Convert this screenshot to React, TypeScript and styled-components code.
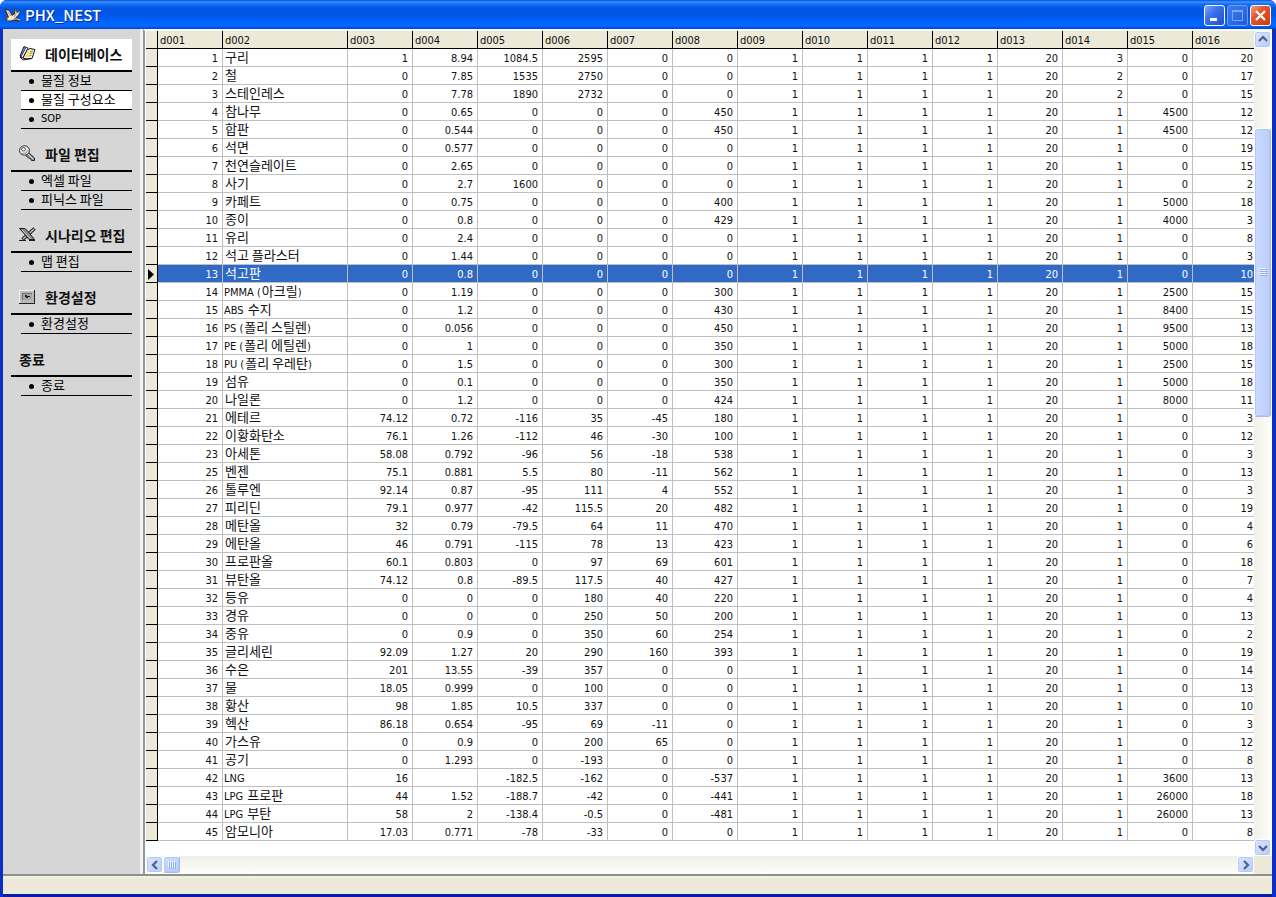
import React from "react";
import styled, { createGlobalStyle, css } from "styled-components";

const GlobalStyle = createGlobalStyle`
  * { box-sizing: border-box; }
  html, body { margin: 0; padding: 0; background: #fff; }
  body {
    font-family: "DejaVu Sans Condensed", "DejaVu Sans", "Noto Sans CJK KR", sans-serif;
    font-size: 11px;
    color: #111;
  }
  button { padding: 0; margin: 0; font: inherit; }
`;

const Window = styled.div`
  min-height: 100vh;
  display: flex;
  flex-direction: column;
  overflow: hidden;
  border-radius: 7px 7px 0 0;
  background: #0a2fc4;
`;

const TitleBar = styled.header`
  height: 29px;
  display: flex;
  align-items: center;
  gap: 4px;
  padding: 1px 5px 0 5px;
  background: linear-gradient(
    to bottom,
    #0a4fd8 0px,
    #3c93ff 2px,
    #1470f5 4px,
    #0358e8 8px,
    #0055e5 14px,
    #0262fb 21px,
    #0468ff 26px,
    #0344cf 29px
  );
`;

const Title = styled.h1`
  flex: 1;
  margin: 0;
  padding-bottom: 1px;
  font: 500 15px/20px "Noto Sans CJK KR", "Liberation Sans", sans-serif;
  color: #fff;
  text-shadow: 1px 1px 0 #0a2e8c;
`;

const WindowButtons = styled.div`
  display: flex;
  gap: 2px;
`;

const WindowButton = styled.button<{ $kind: "normal" | "dim" | "close" }>`
  width: 21px;
  height: 21px;
  display: grid;
  place-items: center;
  border-radius: 3px;
  border: 1px solid ${(p) => (p.$kind === "dim" ? "#6f9df5" : "#fff")};
  background: ${(p) =>
    p.$kind === "close"
      ? "linear-gradient(135deg, #f0a088 0%, #e2552c 40%, #cc3c10 100%)"
      : p.$kind === "dim"
        ? "linear-gradient(135deg, #3f7cf0, #1c5be0)"
        : "linear-gradient(135deg, #7ba6f8 0%, #3a70ea 40%, #1c50d8 100%)"};
`;

const Body = styled.div`
  flex: 1;
  display: flex;
  margin: 0 4px 0 3px;
`;

const Sidebar = styled.nav`
  width: 140px;
  flex: none;
  display: flex;
  flex-direction: column;
  gap: 10px;
  padding: 10px 8px;
  background: #d6d6d6;
  border-right: 3px solid #f0f2f2;
`;

const MenuGroup = styled.section`
  width: 121px;
`;

const GroupTitle = styled.h2<{ $active?: boolean }>`
  height: 33px;
  display: flex;
  align-items: center;
  gap: 9px;
  margin: 0;
  padding: 0 0 2px 8px;
  border-bottom: 2px solid #000;
  font: bold 14px/20px "Noto Sans CJK KR", sans-serif;
  white-space: nowrap;
  background: ${(p) => (p.$active ? "#fff" : "transparent")};
  svg {
    flex: none;
  }
`;

const MenuList = styled.ul`
  list-style: none;
  margin: 0 0 0 10px;
  padding: 0;
`;

const Hangul = styled.span`
  font-family: "Noto Sans CJK KR", sans-serif;
  font-size: 13px;
`;

const MenuLink = styled.a<{ $active?: boolean }>`
  height: 19px;
  display: flex;
  align-items: center;
  gap: 7px;
  padding-left: 8px;
  border-bottom: 1px solid #000;
  color: #000;
  text-decoration: none;
  line-height: 18px;
  white-space: pre;
  background: ${(p) => (p.$active ? "#fff" : "transparent")};
  &::before {
    content: "";
    width: 5px;
    height: 5px;
    border-radius: 50%;
    background: #000;
  }
  ${Hangul} {
    padding-bottom: 2px;
    line-height: 16px;
  }
`;

const GridPanel = styled.main`
  flex: 1;
  min-width: 0;
  display: grid;
  grid-template-columns: minmax(0, 1fr) 18px;
  grid-template-rows: 1fr 18px;
  padding-left: 1px;
  border-top: 2px solid #f6fafa;
  border-left: 2px solid #8f999e;
  background: #fff;
`;

const GridView = styled.div`
  overflow: hidden;
  padding-bottom: 15px;
`;

const Table = styled.table`
  width: 1112px;
  table-layout: fixed;
  border-collapse: separate;
  border-spacing: 0;
`;

const Col = styled.col<{ $w: number }>`
  width: ${(p) => p.$w}px;
`;

const beigeCell = css`
  height: 18px;
  padding: 2px 0 0 2px;
  background: #ece9d8;
  border-right: 1px solid #000;
  border-bottom: 1px solid #000;
`;

const HeadCell = styled.th`
  ${beigeCell}
  font-weight: normal;
  text-align: left;
  line-height: 15px;
`;

const MarkCell = styled.td`
  ${beigeCell}
  line-height: 0;
`;

const Cell = styled.td<{ $name?: boolean }>`
  height: 18px;
  padding: 2px 4px 0 1px;
  border-right: 1px solid #c0c0c0;
  border-bottom: 1px solid #c0c0c0;
  line-height: 15px;
  white-space: pre;
  text-align: ${(p) => (p.$name ? "left" : "right")};
  ${Hangul} {
    display: inline-block;
    height: 15px;
    padding-left: 1px;
    line-height: 12px;
    vertical-align: top;
  }
`;

const Row = styled.tr<{ $selected: boolean }>`
  ${(p) =>
    p.$selected &&
    css`
      ${Cell} {
        background: #316ac5;
        color: #fff;
      }
    `}
`;

const VScroll = styled.div`
  display: flex;
  flex-direction: column;
  align-items: stretch;
  padding-right: 1px;
  background: linear-gradient(to right, #f1f0e8, #fefefa);
`;

const HScroll = styled.div`
  display: flex;
  background: linear-gradient(to bottom, #f1f0e8, #fefefa);
`;

const scrollFace = css`
  display: grid;
  place-items: center;
  border: 1px solid #fff;
  border-radius: 3px;
  box-shadow: inset 0 0 0 1px #b4c8f6;
`;

const ScrollButton = styled.button`
  ${scrollFace}
  width: 17px;
  height: 17px;
  flex: none;
  background: linear-gradient(135deg, #dbe6ff, #b8cdfb);
`;

const VThumb = styled.div`
  ${scrollFace}
  flex: 288 0 0;
  background: linear-gradient(to right, #cbdaff, #bacdfb);
  border-right-color: #a6bce8;
  border-bottom-color: #a6bce8;
`;

const Track = styled.div<{ $grow: number }>`
  flex: ${(p) => p.$grow} 0 0;
`;

const HThumb = styled.div`
  ${scrollFace}
  width: 17px;
  height: 17px;
  background: linear-gradient(to bottom, #cbdaff, #bacdfb);
  border-right-color: #a6bce8;
  border-bottom-color: #a6bce8;
`;

const Corner = styled.div`
  background: #ece9d8;
`;

const StatusBar = styled.footer`
  height: 23px;
  margin: 0 4px 0 3px;
  border-top: 2px solid #8f8f8c;
  border-bottom: 3px solid #0a1fa8;
  background: linear-gradient(to bottom, #f4f3e8 0px, #e8ead6 4px, #f0e4d8 9px, #ecebd8 14px, #eaedda 18px);
`;

const BirdIcon = () => (
  <svg width="16" height="16" viewBox="0 0 16 16" aria-hidden="true">
    <path d="M0 1l4 2 3 4 2-2 0-5 3 5 4-3-2 6-2 3 3 3-1 1-5-1-3 1-5-1-1-2 2-3-2-4z" fill="#3a3a36" />
    <path d="M1 3l3 1 3 5 3-2 0-4 2 3 3-2-2 4-3 3-3 2-4 0-1-1 2-2z" fill="#efeadc" />
    <path d="M2 13l4 0 3-1 3 0 3 1" stroke="#e4d4a6" fill="none" />
    <path d="M3 5l3 4M11 4l0 3-2 3" stroke="#9b9788" fill="none" />
    <path d="M1 11l2 0" stroke="#c98a2c" />
  </svg>
);

const BookIcon = () => (
  <svg width="17" height="17" viewBox="0 0 17 17" aria-hidden="true">
    <path d="M5 1.500l3 1.500-5 10-2-2z" fill="#8d94dc" stroke="#111" />
    <path d="M7 2l2 1-5 10-2-1z" fill="#fff" stroke="#2c3080" />
    <path d="M8 5l3-1.500 5 1-3 9-6 .5-3-1z" fill="#fffce0" stroke="#111" />
    <path d="M9 6l2-1-3 8-2-.5z" fill="#f2e04a" />
    <path d="M11 6.500l3-.5M10.500 8.500l3-.5M9.500 11l3-.5" stroke="#8c7d20" />
    <path d="M1 12l3 3 8-1.500" stroke="#111" fill="none" />
  </svg>
);

const KeyIcon = () => (
  <svg width="17" height="17" viewBox="0 0 17 17" aria-hidden="true">
    <path d="M9 7l6.500 6v2.500h-3l-1-2-2-.5-3-3z" fill="#8f8f8f" stroke="#222" />
    <path d="M9 9l5 5" stroke="#e8e8e8" />
    <ellipse cx="5.500" cy="5.500" rx="5" ry="4.700" fill="#e6e6e6" stroke="#333" />
    <ellipse cx="4.500" cy="4.300" rx="2" ry="1.600" fill="#fff" stroke="#555" />
    <path d="M3 8.500l4-.5 2.500-3" stroke="#999" fill="none" />
  </svg>
);

const ToolsIcon = () => (
  <svg width="17" height="15" viewBox="0 0 17 15" aria-hidden="true">
    <path d="M15.500 1.500l-12 11" stroke="#1c1c1c" strokeWidth="3.500" />
    <path d="M15 2l-11 10" stroke="#c4c4c4" strokeWidth="1.500" />
    <path d="M.5 1.500h5.500l3 3 6.500 8h-5.500l-5-6z" fill="#8a8a8a" stroke="#1c1c1c" />
    <path d="M3 3l9 9" stroke="#c8c8c8" />
    <path d="M0 13.500h7M10 13.500h6" stroke="#1c1c1c" />
  </svg>
);

const MonitorIcon = () => (
  <svg width="17" height="14" viewBox="0 0 17 14" aria-hidden="true">
    <path d="M0 0h16v14H0z" fill="#222" />
    <path d="M0 0h15v13H0z" fill="#f2f2f2" />
    <path d="M1 1h14v12H1z" fill="#b9b9b9" />
    <path d="M3 3h10v7H3z" fill="#707070" />
    <path d="M4 4h9v6H4z" fill="#a6a6a6" />
    <path d="M6 5h2v1h3v1H9v1H7V7H6z" fill="#222" />
  </svg>
);

const arrows = {
  up: "M1 6l4-4 4 4",
  down: "M1 3l4 4 4-4",
  left: "M7 1L3 5l4 4",
  right: "M3 1l4 4-4 4",
};

const Arrow = ({ dir }: { dir: keyof typeof arrows }) => (
  <svg width="10" height="10" viewBox="0 0 10 10" aria-hidden="true">
    <path d={arrows[dir]} fill="none" stroke="#4d6185" strokeWidth="2.200" />
  </svg>
);

const Grip = ({ vertical }: { vertical?: boolean }) => (
  <svg width="8" height="8" viewBox="0 0 8 8" aria-hidden="true">
    <path
      d={vertical ? "M0 .5h7M0 2.500h7M0 4.500h7M0 6.500h7" : "M.5 0v7M2.500 0v7M4.500 0v7M6.500 0v7"}
      stroke="#eef4fe"
    />
    <path
      d={vertical ? "M1 1.500h7M1 3.500h7M1 5.500h7M1 7.500h7" : "M1.500 1v7M3.500 1v7M5.500 1v7M7.500 1v7"}
      stroke="#8cb0f8"
    />
  </svg>
);

/* Korean runs are set larger than the Latin text beside them. */
const Mixed = ({ text }: { text: string }) => (
  <>
    {text
      .split(/([가-힣]+(?: [가-힣]+)*)/)
      .filter(Boolean)
      .map((part, i) => (/[가-힣]/.test(part) ? <Hangul key={i}>{part}</Hangul> : part))}
  </>
);

type Group = { title: string; icon?: React.ReactNode; active?: boolean; items: string[] };

const menu: Group[] = [
  { title: "데이터베이스", icon: <BookIcon />, active: true, items: ["물질 정보", "물질 구성요소", "SOP"] },
  { title: "파일 편집", icon: <KeyIcon />, items: ["엑셀 파일", "피닉스 파일"] },
  { title: "시나리오 편집", icon: <ToolsIcon />, items: ["맵 편집"] },
  { title: "환경설정", icon: <MonitorIcon />, items: ["환경설정"] },
  { title: "종료", items: ["종료"] },
];
const activeItem = "물질 구성요소";

const columns = Array.from({ length: 16 }, (_, i) => "d0" + String(i + 1).padStart(2, "0"));
const columnWidth = (i: number) => (i === 1 ? 125 : 65);

/* id | name | d003..d008 | d014 | d015 | d016 ; d009..d013 hold the same values in every record */
const source = `1|구리|1|8.94|1084.5|2595|0|0|3|0|20
2|철|0|7.85|1535|2750|0|0|2|0|17
3|스테인레스|0|7.78|1890|2732|0|0|2|0|15
4|참나무|0|0.65|0|0|0|450|1|4500|12
5|합판|0|0.544|0|0|0|450|1|4500|12
6|석면|0|0.577|0|0|0|0|1|0|19
7|천연슬레이트|0|2.65|0|0|0|0|1|0|15
8|사기|0|2.7|1600|0|0|0|1|0|2
9|카페트|0|0.75|0|0|0|400|1|5000|18
10|종이|0|0.8|0|0|0|429|1|4000|3
11|유리|0|2.4|0|0|0|0|1|0|8
12|석고 플라스터|0|1.44|0|0|0|0|1|0|3
13|석고판|0|0.8|0|0|0|0|1|0|10
14|PMMA (아크릴)|0|1.19|0|0|0|300|1|2500|15
15|ABS 수지|0|1.2|0|0|0|430|1|8400|15
16|PS (폴리 스틸렌)|0|0.056|0|0|0|450|1|9500|13
17|PE (폴리 에틸렌)|0|1|0|0|0|350|1|5000|18
18|PU (폴리 우레탄)|0|1.5|0|0|0|300|1|2500|15
19|섬유|0|0.1|0|0|0|350|1|5000|18
20|나일론|0|1.2|0|0|0|424|1|8000|11
21|에테르|74.12|0.72|-116|35|-45|180|1|0|3
22|이황화탄소|76.1|1.26|-112|46|-30|100|1|0|12
23|아세톤|58.08|0.792|-96|56|-18|538|1|0|3
25|벤젠|75.1|0.881|5.5|80|-11|562|1|0|13
26|톨루엔|92.14|0.87|-95|111|4|552|1|0|3
27|피리딘|79.1|0.977|-42|115.5|20|482|1|0|19
28|메탄올|32|0.79|-79.5|64|11|470|1|0|4
29|에탄올|46|0.791|-115|78|13|423|1|0|6
30|프로판올|60.1|0.803|0|97|69|601|1|0|18
31|뷰탄올|74.12|0.8|-89.5|117.5|40|427|1|0|7
32|등유|0|0|0|180|40|220|1|0|4
33|경유|0|0|0|250|50|200|1|0|13
34|중유|0|0.9|0|350|60|254|1|0|2
35|글리세린|92.09|1.27|20|290|160|393|1|0|19
36|수은|201|13.55|-39|357|0|0|1|0|14
37|물|18.05|0.999|0|100|0|0|1|0|13
38|황산|98|1.85|10.5|337|0|0|1|0|10
39|헥산|86.18|0.654|-95|69|-11|0|1|0|3
40|가스유|0|0.9|0|200|65|0|1|0|12
41|공기|0|1.293|0|-193|0|0|1|0|8
42|LNG|16||-182.5|-162|0|-537|1|3600|13
43|LPG 프로판|44|1.52|-188.7|-42|0|-441|1|26000|18
44|LPG 부탄|58|2|-138.4|-0.5|0|-481|1|26000|13
45|암모니아|17.03|0.771|-78|-33|0|0|1|0|8`;

const records = source.split("\n").map((line) => {
  const f = line.split("|");
  return [...f.slice(0, 8), "1", "1", "1", "1", "20", ...f.slice(8)];
});
const selectedId = "13";

export default function App() {
  return (
    <>
      <GlobalStyle />
      <Window>
        <TitleBar>
          <BirdIcon />
          <Title>PHX_NEST</Title>
          <WindowButtons>
            <WindowButton $kind="normal" aria-label="Minimize">
              <svg width="15" height="15" viewBox="0 0 15 15">
                <path d="M3 10h7v3H3z" fill="#fff" />
              </svg>
            </WindowButton>
            <WindowButton $kind="dim" aria-label="Maximize">
              <svg width="15" height="15" viewBox="0 0 15 15">
                <path d="M2.500 3v9.500h10V3" fill="none" stroke="#7ea6f4" />
                <path d="M2 3h11" stroke="#7ea6f4" strokeWidth="2" />
              </svg>
            </WindowButton>
            <WindowButton $kind="close" aria-label="Close">
              <svg width="15" height="15" viewBox="0 0 15 15">
                <path d="M3 3l9 9M12 3l-9 9" stroke="#fff" strokeWidth="2.200" />
              </svg>
            </WindowButton>
          </WindowButtons>
        </TitleBar>
        <Body>
          <Sidebar>
            {menu.map((group) => (
              <MenuGroup key={group.title}>
                <GroupTitle $active={group.active}>
                  {group.icon}
                  {group.title}
                </GroupTitle>
                <MenuList>
                  {group.items.map((item) => (
                    <li key={item}>
                      <MenuLink href="#" $active={item === activeItem}>
                        <Mixed text={item} />
                      </MenuLink>
                    </li>
                  ))}
                </MenuList>
              </MenuGroup>
            ))}
          </Sidebar>
          <GridPanel>
            <GridView>
              <Table>
                <colgroup>
                  <Col $w={12} />
                  {columns.map((c, i) => (
                    <Col key={c} $w={columnWidth(i)} />
                  ))}
                </colgroup>
                <thead>
                  <tr>
                    <HeadCell />
                    {columns.map((c) => (
                      <HeadCell key={c} scope="col">
                        {c}
                      </HeadCell>
                    ))}
                  </tr>
                </thead>
                <tbody>
                  {records.map((record) => (
                    <Row key={record[0]} $selected={record[0] === selectedId}>
                      <MarkCell>
                        {record[0] === selectedId && (
                          <svg width="6" height="11" viewBox="0 0 6 11" aria-hidden="true">
                            <path d="M0 0l6 5.500L0 11z" />
                          </svg>
                        )}
                      </MarkCell>
                      {record.map((value, i) => (
                        <Cell key={columns[i]} $name={i === 1}>
                          {i === 1 ? <Mixed text={value} /> : value}
                        </Cell>
                      ))}
                    </Row>
                  ))}
                </tbody>
              </Table>
            </GridView>
            <VScroll>
              <ScrollButton aria-label="Scroll up">
                <Arrow dir="up" />
              </ScrollButton>
              <Track $grow={80} />
              <VThumb>
                <Grip vertical />
              </VThumb>
              <Track $grow={423} />
              <ScrollButton aria-label="Scroll down">
                <Arrow dir="down" />
              </ScrollButton>
            </VScroll>
            <HScroll>
              <ScrollButton aria-label="Scroll left">
                <Arrow dir="left" />
              </ScrollButton>
              <HThumb>
                <Grip />
              </HThumb>
              <Track $grow={1} />
              <ScrollButton aria-label="Scroll right">
                <Arrow dir="right" />
              </ScrollButton>
            </HScroll>
            <Corner />
          </GridPanel>
        </Body>
        <StatusBar />
      </Window>
    </>
  );
}
